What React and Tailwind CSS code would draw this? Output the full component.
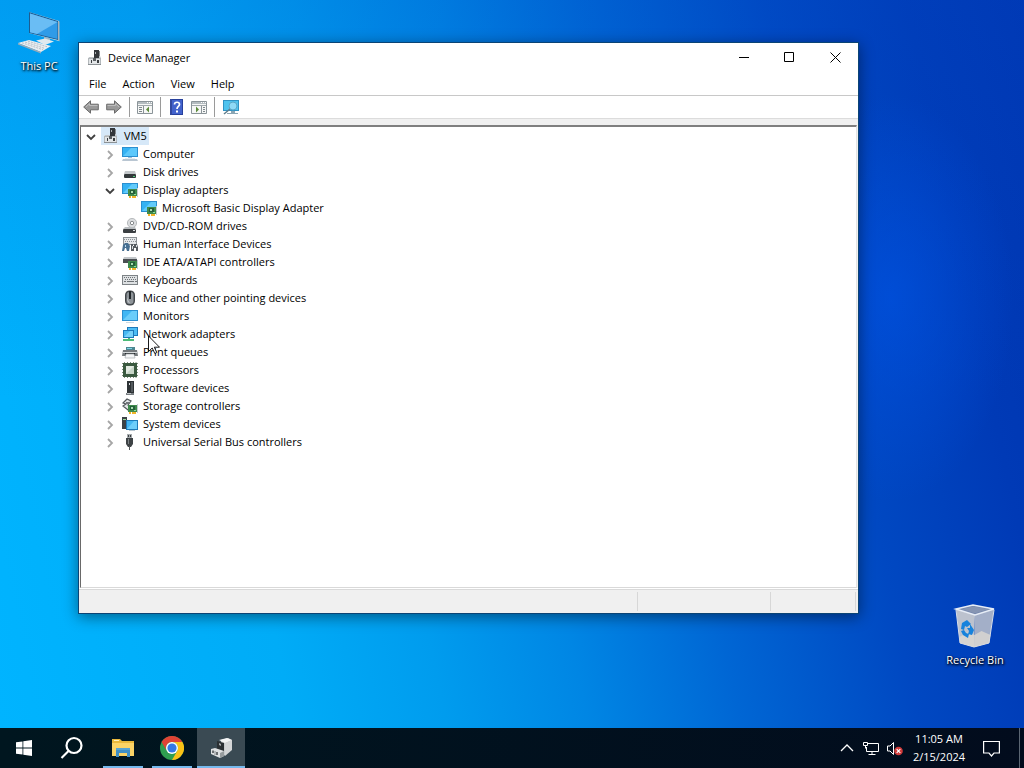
import { useState } from "react";

function ComputerGlyph() {
  return (
    <>
      <path d="M0 1h16v10H0z" fill="#2b8fd0" />
      <path d="M1 2h14v8H1z" fill="#35b2f3" />
      <path d="M1 10L9 2h6v8z" fill="#5cc8fb" />
      <path d="M6 11h4v1H6z" fill="#9fc0d8" />
      <path d="M1 13h14l1 2H0z" fill="#b9c6d2" />
      <path d="M3 12h10v1H3z" fill="#e5ecf2" />
    </>
  );
}

function ChipBadge() {
  return (
    <>
      <path d="M6 7h9v7H6z" fill="#3f8a4c" />
      <path d="M8 8h5v4H8z" fill="#24603a" />
      <path d="M9 9h2v2H9z" fill="#a8dcae" />
      <path d="M12 12h2v1h-2z" fill="#8fe0a0" />
      <path d="M7 14h2v2H7zM10 14h4v2h-4z" fill="#f0b429" />
      <path d="M15 6h1v9h-1z" fill="#c6cdd0" />
    </>
  );
}

function DeviceGlyph() {
  return (
    <>
      <path d="M7 0h5v8H7z" fill="#33373b" />
      <path d="M12 1h1v7h-1z" fill="#85898c" />
      <path d="M8 2h1v2H8z" fill="#b0b5b8" />
      <path d="M2 7h5v1h5V6h1l1 2v1H1z" fill="#c2c7ca" />
      <path d="M1 8h13v7H1z" fill="#b3b8bb" />
      <path d="M2 9h11v5H2z" fill="#e2e5e7" />
      <path d="M1 14h13v1H1z" fill="#8b9195" />
      <path d="M4 10h1v3H4zM10 10h2v3h-2z" fill="#3b3f42" />
      <path d="M6 8h3v3H6z" fill="#5a5f63" />
    </>
  );
}

const glyphs = {
  device: <DeviceGlyph />,
  computer: <ComputerGlyph />,
  disk: (
    <>
      <path d="M3 7h10l1 3H2z" fill="#c3c7ca" />
      <rect x="2" y="10" width="12" height="4" rx="1" fill="#33383b" />
      <path d="M11 12h2v1h-2z" fill="#4fd07a" />
    </>
  ),
  display: (
    <>
      <path d="M0 1h16v11H0z" fill="#2b8fd0" />
      <path d="M1 2h14v9H1z" fill="#35b2f3" />
      <path d="M1 11L10 2h5v9z" fill="#62cbfb" />
      <ChipBadge />
    </>
  ),
  dvd: (
    <>
      <circle cx="10" cy="5" r="4.6" fill="#dadcde" stroke="#a9adb0" strokeWidth=".8" />
      <circle cx="10" cy="5" r="1.7" fill="#fff" stroke="#85898c" />
      <path d="M3 9h10l1 2H1z" fill="#b9bdc0" />
      <rect x="1" y="11" width="13" height="4" rx="1" fill="#3b3f42" />
      <path d="M11 12h2v1h-2z" fill="#dce0e2" />
    </>
  ),
  hid: (
    <>
      <path d="M1 1h14v8H1z" fill="#8d9296" />
      <path d="M2 2h12v6H2z" fill="#e4e7e9" />
      <path d="M2 3.5h12M3 5.5h11" stroke="#8d9296" strokeDasharray="1 1" />
      <path d="M1 9l2-2h3l2 3-1 5H5l-1-3H3l-1 3H0z" fill="#476f91" />
      <path d="M3 9h1v2H3z" fill="#b8daf0" />
      <path d="M9 8h2v2h1V8h3l1 3v4h-2v-3h-2v3H9z" fill="#555b60" />
      <path d="M10 10h1v3h-1zM14 9h1v2h-1z" fill="#d8dcde" />
    </>
  ),
  ide: (
    <>
      <path d="M2 3h12l1 2H1z" fill="#c3c7ca" />
      <path d="M1 5h14v4H1z" fill="#4a4f52" />
      <ChipBadge />
    </>
  ),
  keyboard: (
    <>
      <path d="M0 3h16v10H0z" fill="#7e8387" />
      <path d="M1 4h14v8H1z" fill="#dde0e2" />
      <path d="M2 5.5h12M3 7.5h11" stroke="#6d7276" strokeDasharray="1 1" />
      <path d="M2 9.5h2m1 0h7m1 0h2" stroke="#6d7276" />
    </>
  ),
  mouse: (
    <>
      <rect x="3" y="0.5" width="10" height="15" rx="4.5" fill="#42474b" />
      <rect x="4.5" y="2" width="7" height="12" rx="3" fill="#8e9499" />
      <path d="M7 1h2v8H7z" fill="#22272b" />
      <path d="M5 7c1 3 2 5 3 6-2 0-3-2-3-6z" fill="#c3c8cc" />
    </>
  ),
  monitor: (
    <>
      <path d="M0 2h16v11H0z" fill="#2b8fd0" />
      <path d="M1 3h14v9H1z" fill="#40b7f4" />
      <path d="M1 12L10 3h5v9z" fill="#6bcdfa" />
      <path d="M4 14h8v1H4z" fill="#c9d8e2" />
    </>
  ),
  network: (
    <>
      <path d="M5 1h11v9H5z" fill="#1c79ba" />
      <path d="M6 2h9v7H6z" fill="#4cbcf4" />
      <path d="M1 4h11v8H1z" fill="#1c79ba" />
      <path d="M2 5h9v6H2z" fill="#49b9f2" />
      <path d="M2 11l6-6h3v6z" fill="#76d1fa" />
      <path d="M6 12h2v1h4v2H1v-2h5z" fill="#4dbb78" />
    </>
  ),
  printer: (
    <>
      <path d="M4 3h9v4H4z" fill="#4e8791" />
      <path d="M5 4h5v1H5z" fill="#7fd4e8" />
      <path d="M1 6h14l1 6H0z" fill="#74797c" />
      <path d="M1 8h14v1H1z" fill="#d6dadc" />
      <path d="M3 9h10v3H3z" fill="#24292c" />
      <path d="M4 10h8l1 4H3z" fill="#f5f6f7" stroke="#a8acb0" strokeWidth=".7" />
    </>
  ),
  processor: (
    <>
      <path d="M0 1.5h16M0 4.5h16M0 7.5h16M0 10.5h16M0 13.5h16M2.5 0v16M5.5 0v16M8.5 0v16M11.5 0v16M14 0v16" stroke="#7e8d7c" />
      <path d="M1 1h14v14H1z" fill="#3b5a40" />
      <path d="M4 4h8v8H4z" fill="#e3ebe2" />
      <path d="M4 12l8-8v8z" fill="#c8d6c8" />
    </>
  ),
  software: (
    <>
      <path d="M5 1h7v12H5z" fill="#2e3336" />
      <path d="M9 2h2v10H9z" fill="#53595d" />
      <path d="M7 3h1v2H7z" fill="#d9dddf" />
      <path d="M4 13h8v2H4z" fill="#777d81" />
      <path d="M5 13h4v1H5z" fill="#c4c8ca" />
    </>
  ),
  storage: (
    <>
      <path d="M1 5l4-4 4 2-3 4 3 2-3 3-5-4 3-2z" fill="#e3e6e8" stroke="#50565a" strokeWidth="1.2" />
      <path d="M4 4h3v2H4z" fill="#71777b" />
      <ChipBadge />
    </>
  ),
  system: (
    <>
      <path d="M0 1h5v12H0z" fill="#3c4246" />
      <path d="M1 3h3v1H1z" fill="#9adf9c" />
      <path d="M4 4h12v10H4z" fill="#1c79ba" />
      <path d="M5 5h10v8H5z" fill="#43b5f2" />
      <path d="M5 13l7-8h3v8z" fill="#6dcdfa" />
      <path d="M7 14h6v1H7z" fill="#b7c6d0" />
    </>
  ),
  usb: (
    <>
      <path d="M5 0h5v5H5z" fill="#a6abae" />
      <path d="M6 1h1v2H6zM8 1h1v2H8z" fill="#3b3f42" />
      <path d="M4 4h7v6l-2 3H6l-2-3z" fill="#3e4346" />
      <path d="M6 5h1v5H6z" fill="#7e8487" />
      <path d="M7 12h1v4H7z" fill="#55595c" />
    </>
  ),
};

const categories = [
  { name: "Computer", icon: "computer" },
  { name: "Disk drives", icon: "disk" },
  { name: "Display adapters", icon: "display", devices: ["Microsoft Basic Display Adapter"] },
  { name: "DVD/CD-ROM drives", icon: "dvd" },
  { name: "Human Interface Devices", icon: "hid" },
  { name: "IDE ATA/ATAPI controllers", icon: "ide" },
  { name: "Keyboards", icon: "keyboard" },
  { name: "Mice and other pointing devices", icon: "mouse" },
  { name: "Monitors", icon: "monitor" },
  { name: "Network adapters", icon: "network" },
  { name: "Print queues", icon: "printer" },
  { name: "Processors", icon: "processor" },
  { name: "Software devices", icon: "software" },
  { name: "Storage controllers", icon: "storage" },
  { name: "System devices", icon: "system" },
  { name: "Universal Serial Bus controllers", icon: "usb" },
];

function Glyph({ name }) {
  return (
    <svg viewBox="0 0 16 16" className="w-4 h-4 shrink-0" aria-hidden="true">
      {glyphs[name]}
    </svg>
  );
}

function Chevron({ open, label, onClick }) {
  return (
    <button
      onClick={onClick}
      aria-label={label}
      aria-expanded={open}
      className="w-4 h-4 shrink-0 flex items-center justify-center"
    >
      <svg viewBox="0 0 16 16" className="w-4 h-4" fill="none">
        {open ? (
          <path d="M4 7l4 4 4-4" stroke="#404040" strokeWidth="1.8" />
        ) : (
          <path d="M6 5l4 4-4 4" stroke="#a6a6a6" strokeWidth="1.8" />
        )}
      </svg>
    </button>
  );
}

function DeviceTree() {
  const [open, setOpen] = useState({ root: true, "Display adapters": true });
  const toggle = (key) => setOpen((prev) => ({ ...prev, [key]: !prev[key] }));

  return (
    <ul className="pl-[2px] text-black">
      <li>
        <div className="flex items-center h-[18px]">
          <Chevron open={open.root} label="Toggle VM5" onClick={() => toggle("root")} />
          <span className="ml-[2px] flex items-center h-[18px] gap-[5px] px-[2px] bg-[#d6e8f8]">
            <Glyph name="device" />
            VM5
          </span>
        </div>
        {open.root && (
          <ul>
            {categories.map((cat) => (
              <li key={cat.name}>
                <div className="flex items-center h-[18px] pl-[19px]">
                  <Chevron
                    open={!!open[cat.name]}
                    label={`Toggle ${cat.name}`}
                    onClick={() => toggle(cat.name)}
                  />
                  <span className="ml-1 flex items-center gap-[5px]">
                    <Glyph name={cat.icon} />
                    {cat.name}
                  </span>
                </div>
                {open[cat.name] &&
                  cat.devices?.map((device) => (
                    <div key={device} className="flex items-center gap-[5px] h-[18px] pl-[58px]">
                      <Glyph name={cat.icon} />
                      {device}
                    </div>
                  ))}
              </li>
            ))}
          </ul>
        )}
      </li>
    </ul>
  );
}

function ToolArrow({ flip }) {
  return (
    <svg viewBox="0 0 16 16" className={flip ? "w-4 h-4 -scale-x-100" : "w-4 h-4"}>
      <path
        d="M.7 8L7.5 1.8v3.4h7.8v5.6H7.5v3.4z"
        fill="#999"
        stroke="#6a6a6a"
        strokeLinejoin="round"
      />
      <path d="M3 8l3.500-3.300V6.500h8" fill="none" stroke="#bdbdbd" />
    </svg>
  );
}

function PaneIcon({ actions }) {
  return (
    <svg viewBox="0 0 16 16" className="w-4 h-4">
      <path d="M.5 2.5h15v12H.5z" fill="#f6f7f6" stroke="#8b9499" />
      <path d="M1 3h14v2H1z" fill="#b4bcc0" />
      <path d="M10 3h1v1h-1zM12 3h1v1h-1zM14 3h1v1h-1z" fill="#fff" />
      <path d="M1 6.5h14" stroke="#a0a8ac" />
      {actions ? (
        <>
          <path d="M10.5 7v7" stroke="#8b9499" />
          <path d="M12 8.5h2M12 10.5h2M12 12.5h2" stroke="#7e878c" />
          <path d="M5 7.5l3 3-3 3z" fill="#5d8b3a" />
        </>
      ) : (
        <>
          <path d="M6.5 7v7" stroke="#8b9499" />
          <path d="M2 8.5h3M2 10.5h3M2 12.5h3" stroke="#7e878c" />
          <path d="M12 7.5v6l-3-3z" fill="#5d8b3a" />
        </>
      )}
    </svg>
  );
}

function HelpIcon() {
  return (
    <svg viewBox="0 0 16 16" className="w-4 h-4">
      <path d="M2 0h13v16H2z" fill="#27409c" />
      <path d="M4 1h10v14H4z" fill="#4262cc" />
      <path d="M2 0h2v16H2z" fill="#33489f" />
      <path
        d="M6.500 5.500C6.500 2.500 11.500 2.500 11.500 5.500 11.500 7.500 9 7.500 9 10"
        fill="none"
        stroke="#fff"
        strokeWidth="1.7"
      />
      <path d="M8 11.5h2v2H8z" fill="#fff" />
    </svg>
  );
}

function ScanIcon() {
  return (
    <svg viewBox="0 0 18 16" className="w-[18px] h-4">
      <path d="M1 1h16v11H1z" fill="#3093c4" />
      <path d="M2 2h14v9H2z" fill="#4fc3ee" />
      <path d="M5 14h11v1H5zM9 12h4v2H9z" fill="#8ba6b4" />
      <circle cx="11" cy="7" r="4" fill="#8fdaf6" stroke="#5aa7c8" />
      <path d="M8 10l-6 5" stroke="#5f7d8c" strokeWidth="1.5" />
    </svg>
  );
}

function Divider() {
  return <span className="w-px h-5 bg-[#9a9a9a]" />;
}

function WindowButton({ label, children }) {
  return (
    <button aria-label={label} className="w-[46px] h-full flex items-center justify-center hover:bg-gray-200">
      <svg viewBox="0 0 11 11" className="w-[11px] h-[11px]" fill="none" stroke="#000">
        {children}
      </svg>
    </button>
  );
}

function DeviceManager() {
  return (
    <section
      aria-label="Device Manager"
      className="absolute top-[42px] left-[78px] right-[165px] bottom-[114px] flex flex-col bg-white border border-[#0b4475] shadow-[0_3px_14px_rgba(0,0,0,0.45)] text-black"
    >
      <header className="flex items-center h-[29px] pl-2">
        <Glyph name="device" />
        <h1 className="ml-[5px] flex-1">Device Manager</h1>
        <WindowButton label="Minimize">
          <path d="M1 5.5h10" />
        </WindowButton>
        <WindowButton label="Maximize">
          <path d="M.5 .5h9v9h-9z" />
        </WindowButton>
        <WindowButton label="Close">
          <path d="M.5 .5l10 10M10.5 .5l-10 10" />
        </WindowButton>
      </header>

      <nav className="flex items-center h-6 pl-[2px] border-b border-[#c8c8c8]">
        {["File", "Action", "View", "Help"].map((item) => (
          <button key={item} className="px-2 h-full hover:bg-[#e5f3ff]">
            {item}
          </button>
        ))}
      </nav>

      {/* Toolbar */}
      <div className="flex items-center h-[23px] pl-1 gap-[7px] border-b border-[#dcdcdc]">
        <button aria-label="Back">
          <ToolArrow />
        </button>
        <button aria-label="Forward">
          <ToolArrow flip />
        </button>
        <Divider />
        <button aria-label="Show or hide console tree">
          <PaneIcon />
        </button>
        <Divider />
        <button aria-label="Help">
          <HelpIcon />
        </button>
        <button aria-label="Show or hide action pane">
          <PaneIcon actions />
        </button>
        <Divider />
        <button aria-label="Scan for hardware changes">
          <ScanIcon />
        </button>
      </div>

      <div className="flex-1 min-h-0 flex flex-col bg-[#f0f0f0] pt-[6px] pl-px pr-px">
        <div className="flex-1 min-h-0 overflow-hidden bg-white border-t-2 border-l border-r border-b border-t-[#7f7f7f] border-l-[#696969] border-r-[#e3e3e3] border-b-[#d9d9d9]">
          <DeviceTree />
        </div>
      </div>

      {/* Status bar */}
      <footer className="flex h-6 mt-px bg-[#f0f0f0] border-t border-[#d9d9d9]">
        <span className="flex-1 my-[2px]" />
        <span className="w-[133px] my-[2px] border-l border-[#d7d7d7]" />
        <span className="w-[86px] my-[2px] mr-[2px] border-l border-r border-[#d7d7d7]" />
      </footer>
    </section>
  );
}

function ThisPcIcon() {
  return (
    <svg viewBox="0 1 48 48" className="w-12 h-12">
      <path d="M14 3l30 9v20l-30-8z" fill="#cbe6f7" />
      <path d="M14 3l29 9v19l-29-7z" fill="#1c5d92" />
      <path d="M15 4.500l27.500 8.500v17L15 23.300z" fill="#2f9be8" />
      <path d="M15 4.500l27.500 8.500L22 25l-7-1.700z" fill="#6abdf4" />
      <path d="M43 12l1.500 .5v20L43 31.500z" fill="#a9b3ba" />
      <path d="M29 28l6 1.500v3l-6-1z" fill="#a9bac5" />
      <path d="M21 31.500l9-2 9 3-9 3.500z" fill="#e0e9ee" />
      <path d="M3 34l11-3 22 6-10 6z" fill="#e9edf0" />
      <path d="M3 34l23 9v1.500L3 35.500z" fill="#9cabb7" />
      <path d="M7 33.800l21 7M10 33l20 6.500M13 32.200l19 5.500" stroke="#a9b4be" strokeWidth=".8" strokeDasharray="2 1" />
    </svg>
  );
}

function RecycleBinIcon() {
  return (
    <svg viewBox="0 5 48 48" className="w-12 h-12">
      <path d="M5 10l19 6-1 32-14-4z" fill="#bcc2ce" />
      <path d="M24 16l19-6-5 34-15 4z" fill="#a3afc8" />
      <path d="M5 10l17-4 21 4-19 6z" fill="#7487ac" />
      <path d="M10 10.200l12-2.700 16 2.700-14 4z" fill="#8695b3" />
      <path d="M5 10l17-4 21 4-19 6z" fill="none" stroke="#e7edf6" strokeWidth="1.5" />
      <path d="M5 11l4 33 14 4 15-4 5-33" fill="none" stroke="#d9dfe9" />
      <path d="M8.500 38l9-5 6 3 7-4 9 4-1.500 8L23 48 9 44z" fill="#dcd8d2" opacity=".8" />
      <path d="M11 24l5-3 4 4-4 3-2-1-1 4-3-1zM19 25l4 6-2 5-4-1 1-3-2-3 3 0zM10 32l3-1 2 3 3 1-1 4-5-3z" fill="#1782dc" />
    </svg>
  );
}

function DesktopShortcut({ label, className, children }) {
  return (
    <button className={`absolute w-[76px] flex flex-col items-center text-white ${className}`}>
      {children}
      <span className="leading-4 whitespace-nowrap [text-shadow:1px_1px_2px_#000,0_1px_3px_#000]">
        {label}
      </span>
    </button>
  );
}

function TaskButton({ label, active, running, children }) {
  return (
    <button
      aria-label={label}
      className={`relative w-12 h-10 flex items-center justify-center ${active ? "bg-[#3a4a53]" : "hover:bg-white/10"}`}
    >
      {children}
      {running && (
        <span className={`absolute bottom-0 h-[2px] bg-[#76b9ed] ${active ? "inset-x-0" : "inset-x-1"}`} />
      )}
    </button>
  );
}

function Taskbar() {
  return (
    <footer className="flex items-center h-10 bg-linear-to-r from-[#00161f] to-[#020c1d] text-white">
      <TaskButton label="Start">
        <svg viewBox="0 0 16 16" className="w-4 h-4" fill="#fff">
          <path d="M0 2.300l6.500-.9v6.100H0zM7.300 1.300L16 0v7.500H7.300zM0 8.400h6.500v6.200L0 13.700zM7.300 8.400H16V16l-8.700-1.200z" />
        </svg>
      </TaskButton>
      <TaskButton label="Search">
        <svg viewBox="0 0 24 24" className="w-6 h-6" fill="none" stroke="#fff" strokeWidth="2.200">
          <circle cx="14" cy="9.500" r="7.500" />
          <path d="M8.500 15L1.500 22" />
        </svg>
      </TaskButton>
      <div className="flex gap-px ml-[3px]">
        <TaskButton label="File Explorer" running>
          <svg viewBox="0 0 24 24" className="w-6 h-6">
            <path d="M1 3h8l2 2h12v15H1z" fill="#e9b83c" />
            <path d="M1 7h22v13H1z" fill="#fbd366" />
            <path d="M3 4h5v1H3z" fill="#fff0bd" />
            <path d="M5 12h14v9h-3v-4H8v4H5z" fill="#3f8fc6" />
            <path d="M5 12h14v2H5z" fill="#57a3d4" />
          </svg>
        </TaskButton>
        <TaskButton label="Google Chrome" running>
          <svg viewBox="0 0 24 24" className="w-6 h-6">
            <circle cx="12" cy="12" r="12" fill="#2f9e4f" />
            <path d="M1.600 6a12 12 0 0 1 20.800 0H12a6 6 0 0 0-5.200 9z" fill="#df4335" />
            <path d="M22.400 6A12 12 0 0 1 12 24l5.200-9A6 6 0 0 0 12 6z" fill="#fbc116" />
            <circle cx="12" cy="12" r="6" fill="#fff" />
            <circle cx="12" cy="12" r="4.600" fill="#3478e5" />
          </svg>
        </TaskButton>
        <TaskButton label="Device Manager" running active>
          <svg viewBox="0 0 24 24" className="w-6 h-6">
            <path d="M12 4l7-2 4 2v9l-8 7-4-3z" fill="#c9cccd" />
            <path d="M10 4l8-2 5 2-7 3z" fill="#f4f5f5" />
            <path d="M16 7l7-3v10l-7 6z" fill="#d4d6d7" />
            <path d="M8 5l7 2v9l-7-2z" fill="#2b3033" />
            <path d="M10 7l2 1v2l-2-1z" fill="#a7abad" />
            <path d="M2 13l4-1 9 3v5l-4 2-9-4z" fill="#dfe1e2" />
            <path d="M11 17l4-2v5l-4 2z" fill="#979c9e" />
            <path d="M4 14.500v2.500M8 16v3" stroke="#454a4c" strokeWidth="1.5" />
            <path d="M6 15v4" stroke="#8b9092" />
          </svg>
        </TaskButton>
      </div>

      {/* System tray */}
      <div className="ml-auto flex items-center h-full">
        <button aria-label="Show hidden icons" className="w-6 flex justify-center">
          <svg viewBox="0 0 14 8" className="w-[14px] h-2" fill="none" stroke="#fff" strokeWidth="1.300">
            <path d="M1 7l6-6 6 6" />
          </svg>
        </button>
        <button aria-label="Network" className="w-6 flex justify-center">
          <svg viewBox="0 0 17 15" className="w-[17px] h-[15px]" fill="none" stroke="#fff">
            <path d="M5 2.500h10.500v8h-12V6M5.500 13.500h7M9 11v2" />
            <path d="M.5 1.500h4v3h-4zM2.500 4.500v3" />
          </svg>
        </button>
        <button aria-label="Volume muted" className="w-6 flex justify-center">
          <svg viewBox="0 0 17 15" className="w-[17px] h-[15px]" fill="none" stroke="#fff">
            <path d="M.5 5v5h2.500l3.500 3.500v-12L3 5z" />
            <circle cx="11.500" cy="10" r="4.300" fill="#d13b3b" stroke="none" />
            <path d="M9.700 8.200l3.600 3.600M13.300 8.200l-3.600 3.600" strokeWidth="1.200" />
          </svg>
        </button>
        <button className="w-16 text-center leading-[18px] whitespace-nowrap">
          <span className="block">11:05 AM</span>
          <span className="block">2/15/2024</span>
        </button>
        <button aria-label="Notifications" className="w-10 flex justify-center">
          <svg viewBox="0 0 17 17" className="w-[17px] h-[17px]" fill="none" stroke="#fff" strokeWidth="1.200">
            <path d="M.6 1.500h15.800v11.500h-5.400l-2.500 3-2.500-3H.6z" />
          </svg>
        </button>
        <button aria-label="Show desktop" className="ml-2 w-[5px] h-full border-l border-[#5b6673]" />
      </div>
    </footer>
  );
}

export default function App() {
  return (
    <div className="min-h-screen flex flex-col overflow-hidden bg-[#0078dc] font-['Open_Sans',sans-serif] text-[11px] leading-4">
      <main className="relative flex-1 bg-[radial-gradient(ellipse_12%_28%_at_87%_41%,rgba(0,84,230,0.6)_0%,transparent_100%),linear-gradient(180deg,rgba(0,80,205,0.2)_0%,transparent_55%),linear-gradient(78deg,#00b4ff_0%,#00acf7_25%,#009cee_38%,#0086e4_50%,#0066d4_63%,#0048c2_78%,#003ab6_90%,#0034b0_100%)]">
        <DesktopShortcut label="This PC" className="left-px top-[10px]">
          <ThisPcIcon />
        </DesktopShortcut>
        <DeviceManager />
        <DesktopShortcut label="Recycle Bin" className="right-[11px] bottom-[60px]">
          <RecycleBinIcon />
        </DesktopShortcut>

        {/* Mouse pointer */}
        <svg viewBox="0 0 12 19" className="absolute left-[148px] top-[335px] w-3 h-[19px] pointer-events-none">
          <path d="M.5 1v15.500l3.700-3.500 2.600 5.500 2-1-2.500-5.300h5.200z" fill="#fff" stroke="#000" strokeWidth=".9" />
        </svg>
      </main>
      <Taskbar />
    </div>
  );
}
